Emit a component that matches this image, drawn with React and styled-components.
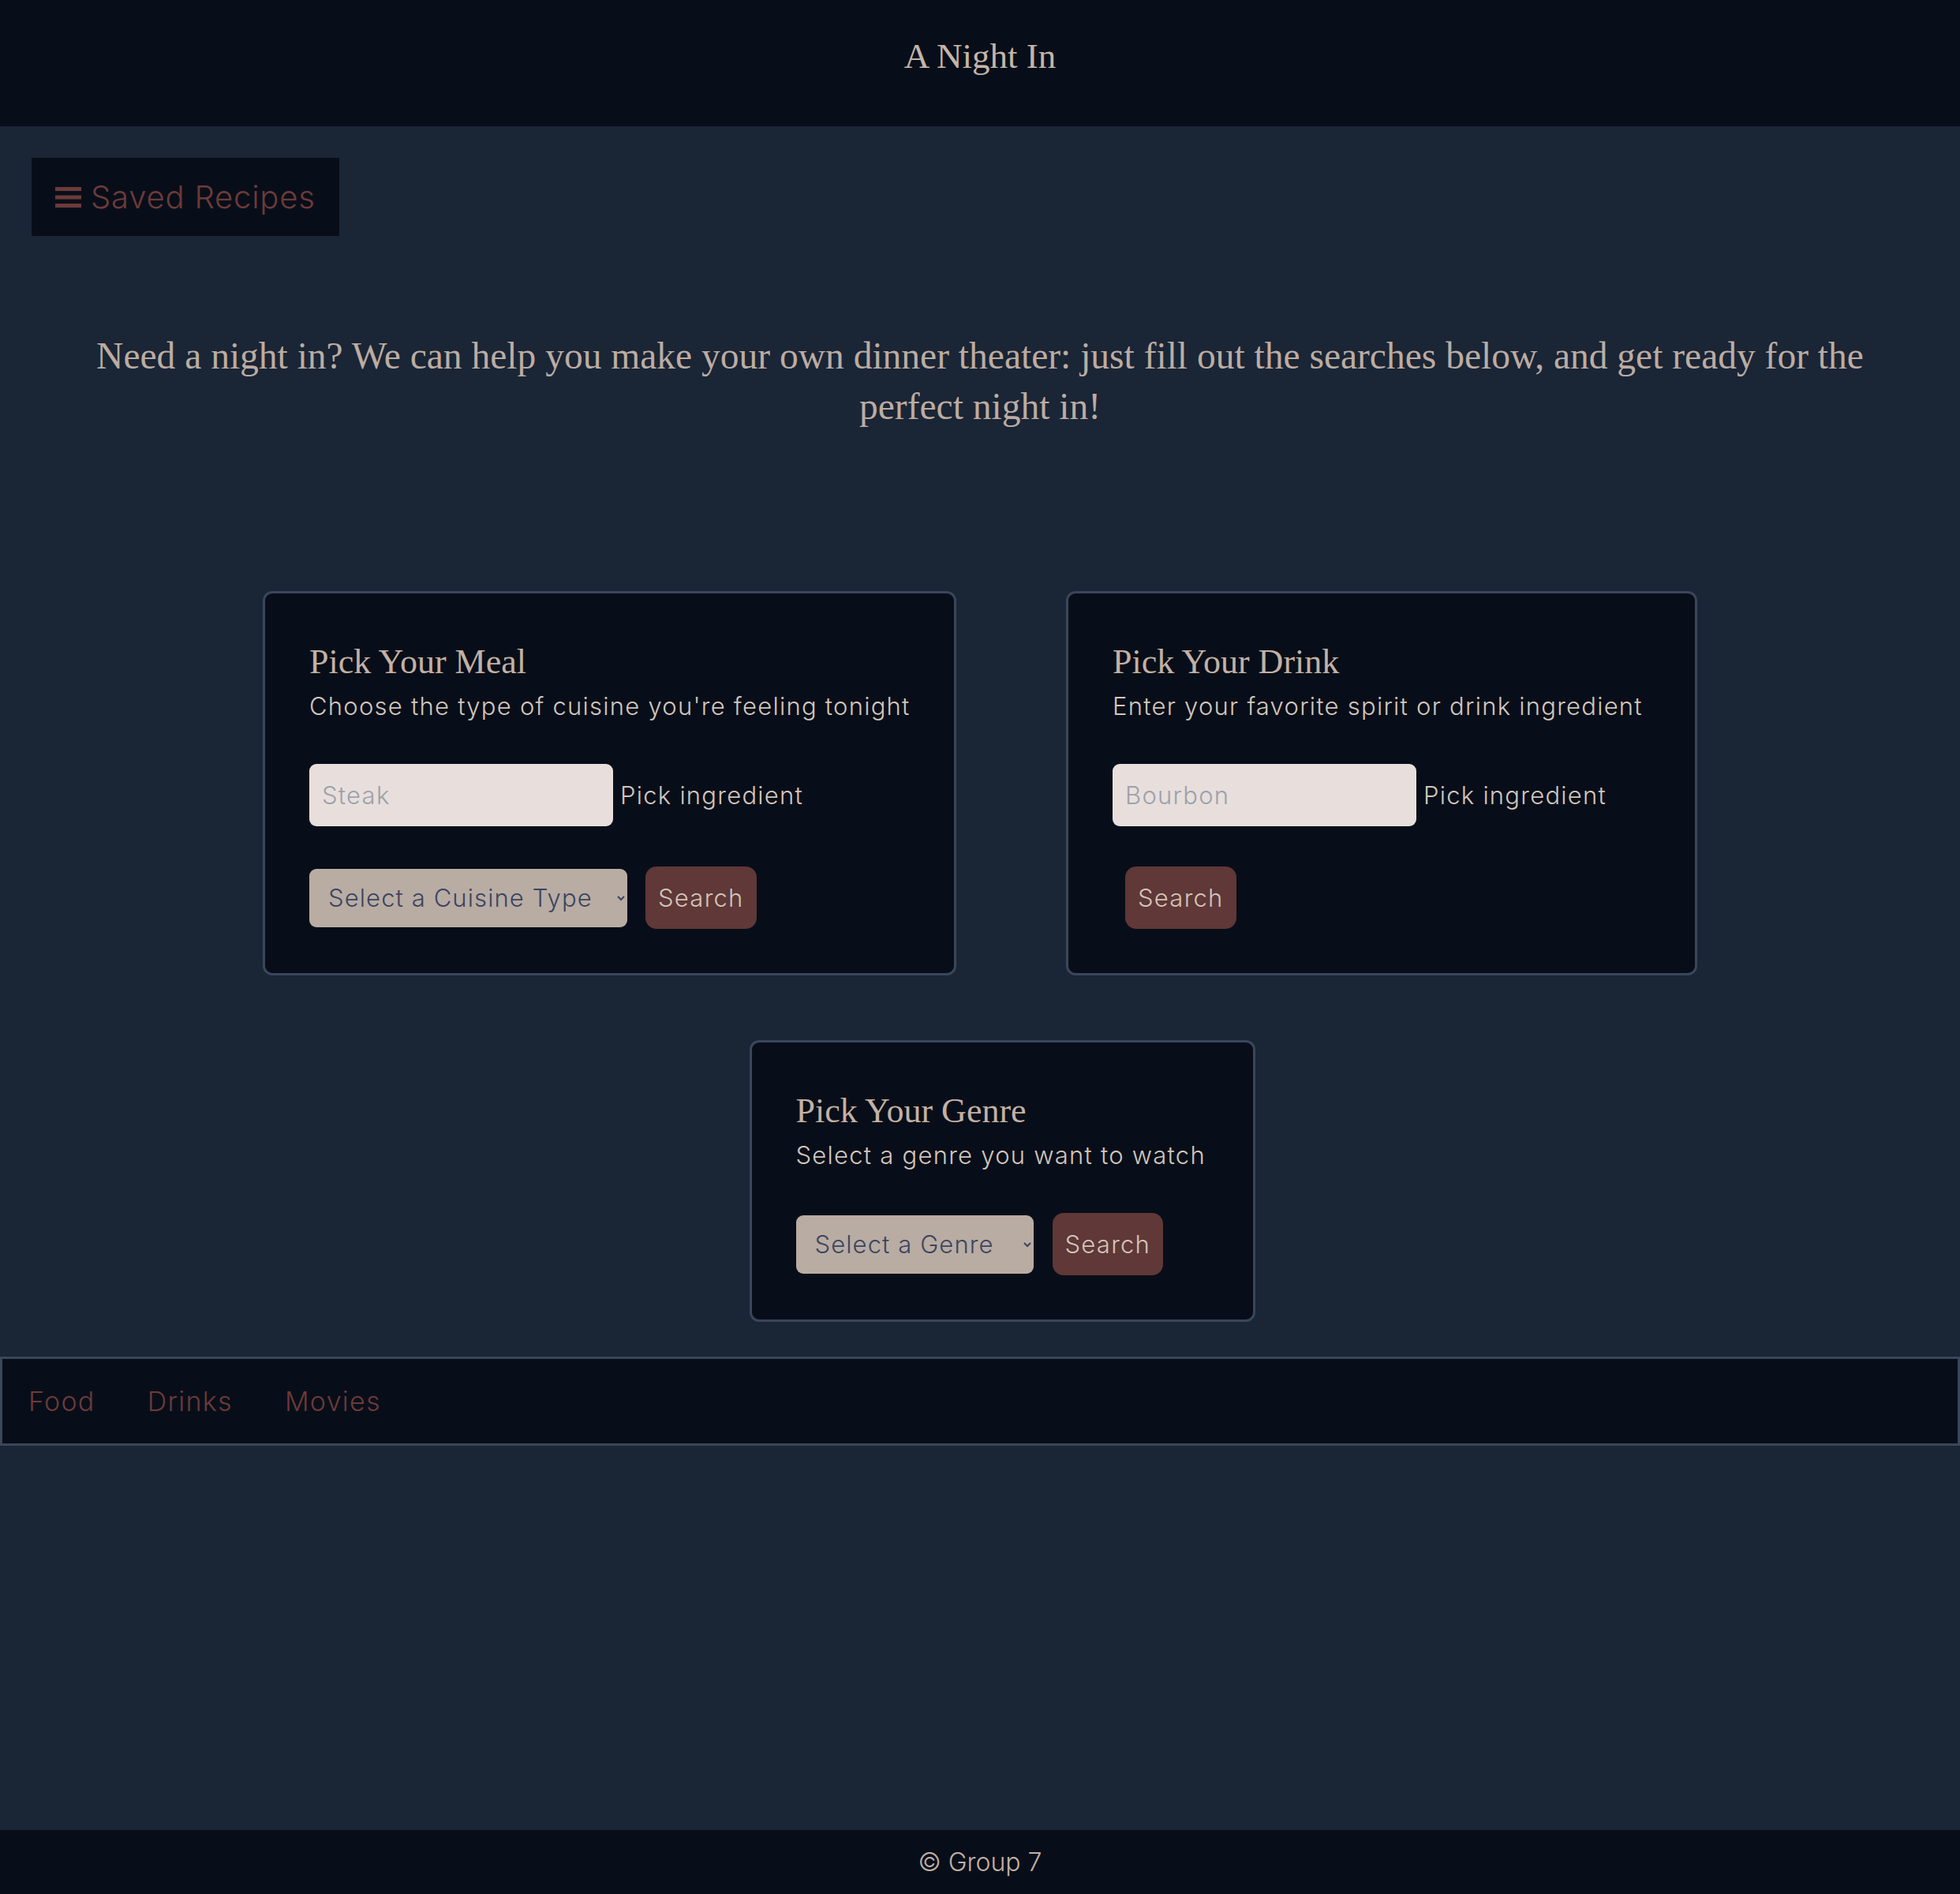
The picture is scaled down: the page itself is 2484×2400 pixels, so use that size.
import React from "react";
import styled, { createGlobalStyle } from "styled-components";

const GlobalStyle = createGlobalStyle`
  html, body {
    margin: 0;
    padding: 0;
    background: #1a2536;
  }
  * { box-sizing: border-box; }
`;

const Page = styled.div`
  min-height: 100vh;
  display: flex;
  flex-direction: column;
  background: #1a2536;
  font-family: "Inter", "Open Sans", sans-serif;
  font-weight: 300;
`;

const Header = styled.header`
  height: 160px;
  background: #080e19;
  display: flex;
  align-items: center;
  justify-content: center;
`;

const SiteTitle = styled.h1`
  margin: 0;
  margin-top: -18px;
  font-family: "Liberation Serif", serif;
  font-weight: 400;
  font-size: 45px;
  color: #c4b5a9;
`;

const Main = styled.main`
  flex: 1;
  display: flex;
  flex-direction: column;
`;

const SavedButton = styled.button`
  align-self: flex-start;
  margin: 40px 0 0 40px;
  height: 99px;
  padding: 0 30px;
  display: flex;
  align-items: center;
  gap: 12px;
  background: #080e19;
  border: none;
  color: #6b3b39;
  font-family: "Inter", sans-serif;
  font-weight: 300;
  font-size: 40px;
  letter-spacing: 0.8px;
  cursor: pointer;
`;

const Intro = styled.p`
  margin: 120px auto 0;
  max-width: 2330px;
  text-align: center;
  font-family: "Liberation Serif", serif;
  font-size: 47.5px;
  line-height: 64px;
  color: #bcaca1;
`;

const CardRow = styled.div`
  display: flex;
  justify-content: center;
  gap: 139px;
  margin-top: ${(p) => p.top}px;
  padding-left: ${(p) => p.shift || 0}px;
`;

const Card = styled.section`
  width: ${(p) => p.width}px;
  background: #080e19;
  border: 3px solid #3a465a;
  border-radius: 12px;
  padding: 60px 56px 56px;
  display: flex;
  flex-direction: column;
`;

const CardTitle = styled.h2`
  margin: 0;
  font-family: "Liberation Serif", serif;
  font-weight: 400;
  font-size: 44px;
  line-height: 53px;
  color: #c2b1a4;
`;

const CardText = styled.p`
  margin: 10px 0 0;
  font-size: 31px;
  letter-spacing: 1.25px;
  line-height: 40px;
  color: #d3c6bd;
  white-space: nowrap;
`;

const Row = styled.div`
  display: flex;
  align-items: center;
  margin-top: ${(p) => p.top}px;
`;

const TextInput = styled.input`
  width: 385px;
  height: 79px;
  border: none;
  border-radius: 9px;
  background: #e8dfdc;
  padding: 0 16px;
  font-family: "Inter", sans-serif;
  font-weight: 300;
  font-size: 31px;
  letter-spacing: 1.25px;
  color: #3b4561;
  &::placeholder { color: #9ca1ac; }
`;

const Label = styled.span`
  margin-left: 9px;
  font-size: 31px;
  letter-spacing: 1.25px;
  color: #d3c6bd;
`;

const Select = styled.select`
  width: ${(p) => p.width}px;
  height: 74px;
  border: none;
  border-radius: 9px;
  background: #b9aca3;
  padding: 0 8px 0 20px;
  font-family: "Inter", sans-serif;
  font-weight: 300;
  font-size: 31px;
  letter-spacing: 1.1px;
  color: #3b4561;
`;

const SearchButton = styled.button`
  height: 79px;
  margin-left: ${(p) => p.gap}px;
  padding: 0 16px;
  border: none;
  border-radius: 14px;
  background: #5f3837;
  color: #d4c4bb;
  font-family: "Inter", sans-serif;
  font-weight: 300;
  font-size: 31px;
  letter-spacing: 1.25px;
  cursor: pointer;
`;

const NavBar = styled.nav`
  margin-top: 44px;
  height: 113px;
  background: #080e19;
  border: 3px solid #3a465a;
  display: flex;
  align-items: center;
`;

const NavLink = styled.a`
  padding: 0 33px;
  font-size: 34px;
  letter-spacing: 1.3px;
  color: #6b3b39;
  text-decoration: none;
`;

const Footer = styled.footer`
  height: 81px;
  background: #080e19;
  display: flex;
  align-items: center;
  justify-content: center;
  font-size: 32px;
  color: #c0b1a6;
`;

function MenuIcon() {
  return (
    <svg width="33" height="28" viewBox="0 0 33 28">
      <rect x="0" y="1" width="33" height="5" fill="#6b3b39" />
      <rect x="0" y="11.5" width="33" height="5" fill="#6b3b39" />
      <rect x="0" y="22" width="33" height="5" fill="#6b3b39" />
    </svg>
  );
}

export default function App() {
  return (
    <Page>
      <GlobalStyle />
      <Header>
        <SiteTitle>A Night In</SiteTitle>
      </Header>
      <Main>
        <SavedButton>
          <MenuIcon />
          Saved Recipes
        </SavedButton>
        <Intro>
          Need a night in? We can help you make your own dinner theater: just fill out the
          searches below, and get ready for the perfect night in!
        </Intro>
        <CardRow top={202}>
          <Card width={879}>
            <CardTitle>Pick Your Meal</CardTitle>
            <CardText>Choose the type of cuisine you're feeling tonight</CardText>
            <Row top={53}>
              <TextInput placeholder="Steak" />
              <Label>Pick ingredient</Label>
            </Row>
            <Row top={51}>
              <Select width={403} defaultValue="">
                <option value="">Select a Cuisine Type</option>
              </Select>
              <SearchButton gap={23}>Search</SearchButton>
            </Row>
          </Card>
          <Card width={800}>
            <CardTitle>Pick Your Drink</CardTitle>
            <CardText>Enter your favorite spirit or drink ingredient</CardText>
            <Row top={53}>
              <TextInput placeholder="Bourbon" />
              <Label>Pick ingredient</Label>
            </Row>
            <Row top={51}>
              <SearchButton gap={16}>Search</SearchButton>
            </Row>
          </Card>
        </CardRow>
        <CardRow top={82} shift={56}>
          <Card width={641}>
            <CardTitle>Pick Your Genre</CardTitle>
            <CardText>Select a genre you want to watch</CardText>
            <Row top={53}>
              <Select width={301} defaultValue="">
                <option value="">Select a Genre</option>
              </Select>
              <SearchButton gap={24}>Search</SearchButton>
            </Row>
          </Card>
        </CardRow>
        <NavBar>
          <NavLink href="#">Food</NavLink>
          <NavLink href="#">Drinks</NavLink>
          <NavLink href="#">Movies</NavLink>
        </NavBar>
      </Main>
      <Footer>© Group 7</Footer>
    </Page>
  );
}
